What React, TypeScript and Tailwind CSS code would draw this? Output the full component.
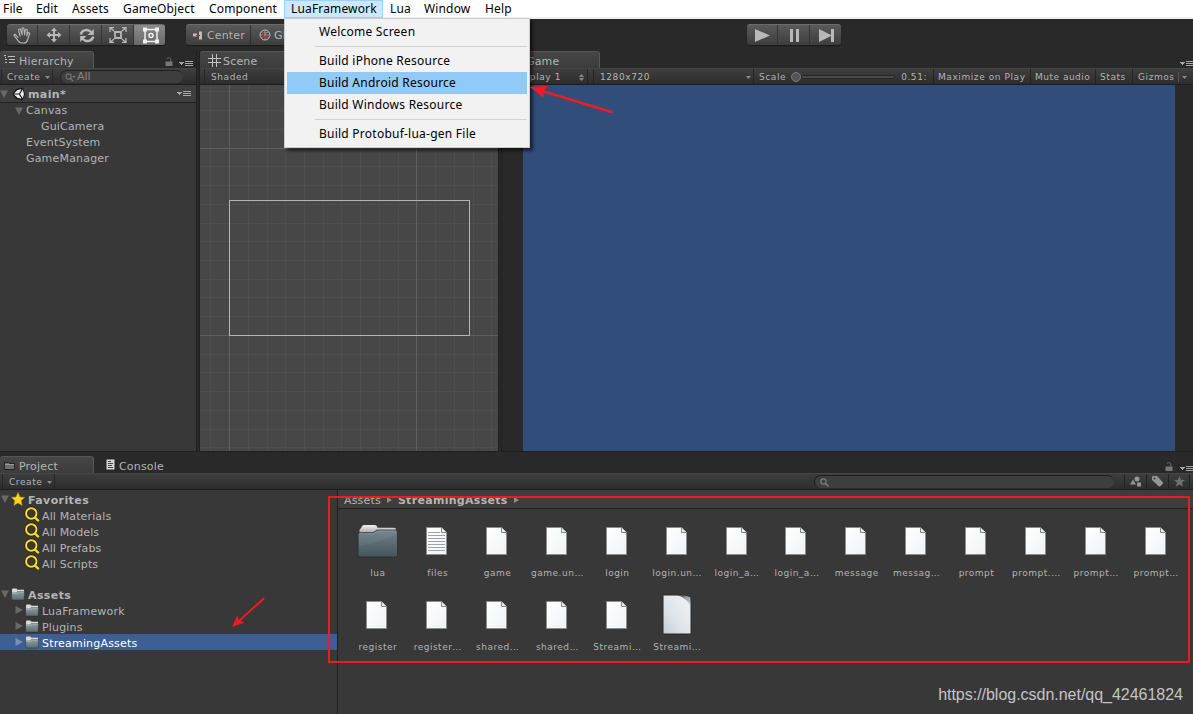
import React from "react";

type Children = { children?: React.ReactNode };

const menus: { label: string; width: string; active?: boolean }[] = [
  { label: "File", width: "w-[29px] pl-[3px]" },
  { label: "Edit", width: "w-[36px] pl-[7px]" },
  { label: "Assets", width: "w-[51px] pl-[7px]" },
  { label: "GameObject", width: "w-[86px] pl-[7px]" },
  { label: "Component", width: "w-[82px] pl-[7px]" },
  { label: "LuaFramework", width: "w-[99px] pl-[6px]", active: true },
  { label: "Lua", width: "w-[34px] pl-[7px]" },
  { label: "Window", width: "w-[61px] pl-[7px]" },
  { label: "Help", width: "w-[42px] pl-[7px]" },
];

const files: { label: string; kind: "folder" | "text" | "doc" | "large" }[] = [
  { label: "lua", kind: "folder" },
  { label: "files", kind: "text" },
  { label: "game", kind: "doc" },
  { label: "game.un…", kind: "doc" },
  { label: "login", kind: "doc" },
  { label: "login.un…", kind: "doc" },
  { label: "login_a…", kind: "doc" },
  { label: "login_a…", kind: "doc" },
  { label: "message", kind: "doc" },
  { label: "messag…", kind: "doc" },
  { label: "prompt", kind: "doc" },
  { label: "prompt.…", kind: "doc" },
  { label: "prompt…", kind: "doc" },
  { label: "prompt…", kind: "doc" },
  { label: "register", kind: "doc" },
  { label: "register…", kind: "doc" },
  { label: "shared…", kind: "doc" },
  { label: "shared…", kind: "doc" },
  { label: "Streami…", kind: "doc" },
  { label: "Streami…", kind: "large" },
];

const gridX = [10, 48, 67, 85, 104, 123, 141, 160, 179, 198, 235, 254, 273, 291];
const gridY = [6, 25, 44, 81, 100, 119, 138, 156, 175, 194, 212, 231, 269, 287, 306, 325, 344, 362];

function Caret({ className = "" }: { className?: string }) {
  return (
    <svg className={`shrink-0 ${className}`} width="5" height="3" viewBox="0 0 5 3">
      <path d="M0 0h5L2.5 3z" fill="#8c8c8c" />
    </svg>
  );
}

function PaneMenu({ className = "" }: { className?: string }) {
  return (
    <svg className={`shrink-0 ${className}`} width="14" height="6" viewBox="0 0 14 6" shapeRendering="crispEdges">
      <path d="M0 1h5L2.5 4z" fill="#a6a6a6" />
      <path d="M6 0h8v1H6zM6 2h8v1H6zM6 4h8v1H6z" fill="#a6a6a6" />
    </svg>
  );
}

function Lock({ className = "" }: { className?: string }) {
  return (
    <svg className={`shrink-0 ${className}`} width="8" height="10" viewBox="0 0 8 10">
      <path d="M1.8 1.8C2.2.3 5.8.2 5.8 2.4V5" fill="none" stroke="#707070" />
      <path d="M.5 4.5h7V9h-7z" fill="#777" />
    </svg>
  );
}

function Fold({ open, bright }: { open?: boolean; bright?: boolean }) {
  return (
    <svg className="shrink-0" width="8" height="8" viewBox="0 0 8 8">
      <path d={open ? "M0 .5h8L4 8z" : "M.5 0v8L8 4z"} fill={bright ? "#7a8fb5" : "#686868"} />
    </svg>
  );
}

function FolderIcon() {
  return (
    <svg className="block shrink-0" width="14" height="13" viewBox="0 0 14 13">
      <path d="M1 1.500Q1 .5 2 .5h3.500l1 1.300H13V5H1z" fill="#d9d9d9" />
      <path d="M.5 5h5l1-1.500h7L13.200 12H.8z" fill="url(#folderSmall)" stroke="#2a3233" strokeWidth=".5" />
      <path d="M1 5.500h5l1-1.500h6" fill="none" stroke="#aab8bd" strokeWidth=".8" />
    </svg>
  );
}

function SearchYellow() {
  return (
    <svg className="block shrink-0" width="16" height="16" viewBox="0 0 16 16">
      <circle cx="7.300" cy="7.500" r="5.200" fill="none" stroke="#2a2508" strokeWidth="3.400" />
      <path d="M11.300 11.800l3 2.700" stroke="#2a2508" strokeWidth="3.600" />
      <circle cx="7.300" cy="7.500" r="5.200" fill="none" stroke="#fbd935" strokeWidth="2" />
      <path d="M11.300 11.800l2.700 2.500" stroke="#fbd91b" strokeWidth="2.500" strokeLinecap="round" />
    </svg>
  );
}

function ToolButton({ children, className = "" }: Children & { className?: string }) {
  return <div className={`flex h-full items-center justify-center ${className}`}>{children}</div>;
}

function FileIcon({ kind }: { kind: "folder" | "text" | "doc" | "large" }) {
  if (kind === "folder") {
    return (
      <svg width="42" height="36" viewBox="0 0 42 36">
        <path d="M2.500 10V7q0-1 1-1.300L5 3.500Q5.500 2 7 2h11q1.500 0 2 1.500l.5 1.200H37q2 0 2.200 2V10z" fill="url(#folderBack)" />
        <path d="M1 11.500q0-1.800 2-1.800h13l4-2.700h18.500q2 0 2 2V32q0 2-2 2H3q-2 0-2-2z" fill="url(#folderFront)" stroke="#272c2e" strokeWidth=".8" />
        <path d="M2 23V11.500q0-1 1.500-1H16.500l4-2.700h18.500v4Q24 19 2 23z" fill="#fff" opacity=".05" />
        <path d="M2.500 10.700h14l4-2.700h18" fill="none" stroke="#93a2a8" strokeWidth=".6" />
      </svg>
    );
  }
  if (kind === "large") {
    return (
      <svg width="30" height="42" viewBox="0 0 30 42">
        <path d="M1 1h15q8 0 12 2 1 4 1 10v27H1z" fill="url(#pageLarge)" stroke="#28292a" strokeWidth="1" />
        <path d="M16 1.300q8 0 12.300 2v9Q25.500 5 16 1.300z" fill="url(#pageCurl)" />
      </svg>
    );
  }
  return (
    <svg width="21" height="28" viewBox="0 0 21 28">
      <path d="M.5.500h15l5 5v22H.5z" fill="url(#page)" stroke="#8b8d8d" />
      <path d="M15.500.500v5h5" fill="#eee" stroke="#858787" />
      {kind === "text" && (
        <path d="M2 5.500h12M2 8.500h17M2 11.500h17M2 14.500h17M2 17.500h17M2 20.500h17M2 23.500h17" stroke="#a2a2a2" />
      )}
    </svg>
  );
}

function TreeRow({ open, leaf, indent, icon, label, bold, selected }: {
  open?: boolean; leaf?: boolean; indent: string; icon?: React.ReactNode; label: string; bold?: boolean; selected?: boolean;
}) {
  return (
    <div className={`flex h-4 shrink-0 items-center ${indent} ${selected ? "bg-[#3e5f96] text-white" : ""}`}>
      {!leaf && <Fold open={open} bright={selected} />}
      {icon}
      <span className={`${icon ? "ml-[3px] pt-[2px]" : "ml-[3px] pb-[2px]"} ${bold ? "font-bold tracking-[0.4px]" : ""}`}>{label}</span>
    </div>
  );
}

function MenuItem({ label, active }: { label: string; active?: boolean }) {
  return (
    <div className={`flex h-[22px] items-center pl-8 ${active ? "bg-[#91c9f7]" : ""}`}>{label}</div>
  );
}

function Defs() {
  return (
    <svg className="absolute h-0 w-0">
      <defs>
        <linearGradient id="folderFront" x1="0" y1="0" x2="0" y2="1">
          <stop offset="0" stopColor="#6f8089" />
          <stop offset="1" stopColor="#45555b" />
        </linearGradient>
        <linearGradient id="folderSmall" x1="0" y1="0" x2="0" y2="1">
          <stop offset="0" stopColor="#92a0a5" />
          <stop offset="1" stopColor="#5c6b70" />
        </linearGradient>
        <linearGradient id="folderBack" x1="0" y1="0" x2="0" y2="1">
          <stop offset="0" stopColor="#f0f0f0" />
          <stop offset="1" stopColor="#a6a6a6" />
        </linearGradient>
        <linearGradient id="page" x1="0" y1="0" x2="1" y2="1">
          <stop offset="0" stopColor="#fff" />
          <stop offset="1" stopColor="#f0f2f4" />
        </linearGradient>
        <linearGradient id="pageLarge" x1="1" y1="0" x2="0" y2="1">
          <stop offset="0" stopColor="#f2f5f7" />
          <stop offset=".6" stopColor="#dfe4e8" />
          <stop offset="1" stopColor="#c3ccd5" />
        </linearGradient>
        <linearGradient id="pageCurl" x1="0" y1="0" x2="1" y2="1">
          <stop offset="0" stopColor="#30353a" />
          <stop offset=".4" stopColor="#8f9aa2" />
          <stop offset="1" stopColor="#d0d6da" />
        </linearGradient>
      </defs>
    </svg>
  );
}

const bar = "flex h-[17px] shrink-0 items-center border-t border-b border-t-[#454545] border-b-[#1d1d1d] bg-gradient-to-b from-[#3e3e3e] to-[#2d2d2d] text-[9px] tracking-[0.58px] whitespace-nowrap";
const tab = "flex h-[17px] items-center rounded-t-[3px] border-t border-r border-t-[#555] border-r-[#595959] bg-gradient-to-b from-[#464646] to-[#3c3c3c]";
const group = "flex h-[21px] shrink-0 overflow-hidden rounded-[3px] border-t border-t-[#6b6b6b] bg-gradient-to-b from-[#5a5a5a] to-[#3d3d3d] shadow-[0_1px_1px_#1a1a1a]";

export default function App() {
  return (
    <div className="relative flex h-[714px] w-[1193px] flex-col overflow-hidden bg-[#292929] font-['DejaVu_Sans',sans-serif] text-[11px] leading-none tracking-[0.18px] text-[#b4b4b4]">
      <Defs />

      {/* Menu bar */}
      <div className="flex h-[19px] shrink-0 border-b-2 border-[#f0f0f0] bg-white font-['Noto_Sans',sans-serif] text-[12px] tracking-[0.15px] text-black">
        {menus.map((m) => (
          <div key={m.label} className={`flex h-[18px] items-center ${m.width} ${m.active ? "border border-[#99d1ff] bg-[#cce8ff]" : ""}`}>
            {m.label}
          </div>
        ))}
      </div>

      {/* Toolbar */}
      <div className="flex h-8 shrink-0 pt-[5px]">
        <div className={`ml-[7px] w-[158px] ${group}`}>
          <ToolButton className="w-[31px] border-r border-[#343434]">
            <svg width="18" height="17" viewBox="0 0 18 17" fill="none" stroke="#b8b8b8" strokeWidth="1.1" strokeLinejoin="round" strokeLinecap="round">
              <path d="M5 10.500L2.200 7.400Q.8 7 1.100 8.300L5.300 14q1 2 3.700 2h2q2.600 0 3.500-3L16.600 7q.2-1.300-.9-1.400-.8 0-1.100 1L13.700 9 14.300 3.400q0-1.200-1-1.200t-1.100 1.200L11.500 8 11 2q0-1.200-1-1.200T9 2v5.800L7.700 2.800Q7.400 1.700 6.400 2t-.8 1.300L7 9" />
            </svg>
          </ToolButton>
          <ToolButton className="w-8 border-r border-[#343434]">
            <svg width="16" height="16" viewBox="0 0 16 16" fill="#b8b8b8">
              <path d="M8 .5l3 3.500H9v3h3V5l3.500 3L12 11V9H9v3h2l-3 3.500L5 12h2V9H4v2L.5 8 4 5v2h3V4H5z" />
            </svg>
          </ToolButton>
          <ToolButton className="w-8 border-r border-[#343434] pl-[2px]">
            <svg width="16" height="15" viewBox="0 0 16 15">
              <path d="M1.800 6.500C2.500 1.800 9 .3 12.300 4.300M14.200 8.500C13.500 13.200 7 14.700 3.700 10.700" fill="none" stroke="#b8b8b8" strokeWidth="2.400" />
              <path d="M14.800 1v6H8.600zM1.200 14V8h6.200z" fill="#b8b8b8" />
            </svg>
          </ToolButton>
          <ToolButton className="w-8 border-r border-[#343434] pl-[1px]">
            <svg width="18" height="16" viewBox="0 0 18 16" fill="none" stroke="#b8b8b8">
              <path d="M6 5h6v6H6z" strokeWidth="1.800" />
              <path d="M5 4L1.500 1M13 4l3.500-3M5 12l-3.500 3M13 12l3.500 3M1 5V.700h4M13 .700h4V5M1 11v4.300h4M13 15.300h4V11" strokeWidth="1.300" />
            </svg>
          </ToolButton>
          <ToolButton className="w-[31px] bg-gradient-to-b from-[#8a8a8a] to-[#696969] pl-[2px]">
            <svg width="18" height="17" viewBox="0 0 18 17" fill="none" stroke="#f0f0f0">
              <path d="M3 2.500h12v12H3z" strokeWidth="1.500" />
              <circle cx="9" cy="8.500" r="2" strokeWidth="1.500" />
              <path d="M1 .5h4v4H1zM13 .5h4v4h-4zM1 12.500h4v4H1zM13 12.500h4v4h-4z" fill="#f0f0f0" stroke="none" />
            </svg>
          </ToolButton>
        </div>
        <div className={`ml-[21px] w-[132px] ${group}`}>
          <div className="flex w-[65px] items-center border-r border-[#303030] pl-[7px]">
            <svg className="shrink-0" width="11" height="9" viewBox="0 0 11 9">
              <path d="M0 2.500h4v3H0zM6 .5h3v8H6z" fill="#bcbcbc" />
              <path d="M5 0v9M3 4.500h4" stroke="#9e3036" />
            </svg>
            <span className="ml-[3px] tracking-[0.15px]">Center</span>
          </div>
          <div className="flex items-center pl-[8px]">
            <svg className="shrink-0" width="12" height="12" viewBox="0 0 12 12" fill="none" stroke="#b8b8b8">
              <circle cx="6" cy="6" r="5" />
              <path d="M6 1v10M1 6h10M2 3q4 2 8 0M2 9q4-2 8 0" strokeWidth=".6" />
              <path d="M4 3v5h5" stroke="#b92831" strokeWidth="1.500" />
            </svg>
            <span className="ml-[3px]">Global</span>
          </div>
        </div>
        <div className={`ml-[429px] w-[94px] ${group}`}>
          <ToolButton className="w-[31px] border-r border-[#343434]">
            <svg width="15" height="13" viewBox="0 0 15 13"><path d="M0 0l15 6.500L0 13z" fill="#b8b8b8" /></svg>
          </ToolButton>
          <ToolButton className="w-8 border-r border-[#343434] pl-[2px]">
            <svg width="9" height="13" viewBox="0 0 9 13"><path d="M0 0h3v13H0zM6 0h3v13H6z" fill="#b8b8b8" /></svg>
          </ToolButton>
          <ToolButton className="w-[31px] pl-[2px]">
            <svg width="15" height="13" viewBox="0 0 15 13"><path d="M0 0l12 6v-6h3v13h-3V7L0 13z" fill="#b8b8b8" /></svg>
          </ToolButton>
        </div>
      </div>

      {/* Upper panels */}
      <div className="flex h-[401px] shrink-0">
        <section className="flex w-[197px] flex-col border-r border-b border-[#1f1f1f]">
          <div className="flex h-[17px]">
            <div className={`w-[94px] pl-1 ${tab}`}>
              <svg className="mr-[3px] shrink-0" width="12" height="10" viewBox="0 0 12 10" shapeRendering="crispEdges">
                <path d="M0 0h2v1H0zM4 1h7v1H4zM1 2h1v1H1zM1 4h2v1H1zM5 4h6v1H5zM1 7h2v1H1zM5 7h6v1H5z" fill="#bebebe" />
              </svg>
              <span className="pt-[2px]">Hierarchy</span>
            </div>
            <Lock className="mt-[6px] ml-[71px]" />
            <PaneMenu className="mt-[10px] ml-[6px]" />
          </div>
          <div className={bar}>
            <div className="ml-[1px] flex h-full w-[52px] items-center border-r border-l border-[#262626] pt-[1px] pl-[5px]">
              Create<Caret className="ml-[5px]" />
            </div>
            <div className="ml-[7px] flex h-[13px] w-[123px] items-center rounded-full border-t border-l border-[#222] bg-[#3e3e3e] pl-1 text-[11px] tracking-normal text-[#858585]">
              <svg className="mr-[1px] shrink-0" width="11" height="9" viewBox="0 0 11 9">
                <circle cx="3.500" cy="3.500" r="2.600" fill="none" stroke="#757575" strokeWidth="1.200" />
                <path d="M5.500 5.500L8 8" stroke="#757575" strokeWidth="1.400" /><path d="M7 3h4L9 5z" fill="#757575" />
              </svg>
              <span className="pb-[2px]">All</span>
            </div>
          </div>
          <div className="flex flex-1 flex-col bg-[#383838]">
            <div className="flex h-[18px] shrink-0 items-center border-b border-[#222] bg-[#3e3e3e]">
              <Fold open />
              <svg className="ml-[4px] shrink-0" width="14" height="14" viewBox="0 0 14 14">
                <path d="M10.500.500L13 7l-2.500 6.500L4 12 .3 7 4 2z" fill="#1b1b1b" />
                <path d="M5.500 3L9.500 2.200 7 6.500H2zM2 7.500h5l2.500 4.300-4-1zM10.700 2.800L12 7l-1.300 4.200L8 7z" fill="#eee" />
              </svg>
              <span className="ml-[2px] pt-[1px] font-bold tracking-[0.4px]">main*</span>
              <PaneMenu className="ml-auto mr-[5px]" />
            </div>
            <TreeRow open indent="pl-[15px]" label="Canvas" />
            <TreeRow leaf indent="pl-[38px]" label="GuiCamera" />
            <TreeRow leaf indent="pl-[23px]" label="EventSystem" />
            <TreeRow leaf indent="pl-[23px]" label="GameManager" />
          </div>
        </section>

        <section className="ml-[2px] flex w-[300px] flex-col border-r border-b border-l border-[#1f1f1f]">
          <div className={`w-[94px] pl-2 ${tab}`}>
            <svg className="mr-[2px] shrink-0" width="13" height="13" viewBox="0 0 13 13" shapeRendering="crispEdges">
              <path d="M4 0h1v13H4zM8 0h1v13H8zM0 4h13v1H0zM0 8h13v1H0z" fill="#c1c1c1" />
            </svg>
            <span className="pt-[2px]">Scene</span>
          </div>
          <div className={bar}>
            <div className="ml-1 flex h-full w-[120px] items-center border-l border-[#262626] pt-[1px] pl-[6px]">Shaded</div>
          </div>
          <svg className="h-[366px] w-[298px] bg-[#474747]" viewBox="0 0 298 366" shapeRendering="crispEdges">
            {gridX.map((x) => <rect key={`x${x}`} x={x} width="1" height="366" fill="#4e4e4e" />)}
            {gridY.map((y) => <rect key={`y${y}`} y={y} width="298" height="1" fill="#4e4e4e" />)}
            <path d="M29.500 0v366M216.500 0v366M0 63.500h298M0 250.500h298" stroke="#606060" />
            <rect x="29.500" y="115.500" width="240" height="135" fill="none" stroke="#b5b5b5" />
          </svg>
        </section>

        <section className="ml-[2px] flex flex-1 flex-col border-b border-l border-[#1f1f1f]">
          <div className="flex h-[17px]">
            <div className={`w-[98px] pl-[24px] ${tab}`}><span className="pt-[2px]">Game</span></div>
            <PaneMenu className="mt-[10px] -mr-px ml-auto" />
          </div>
          <div className={bar}>
            <div className="flex h-full w-[86px] items-center border-r border-[#232323] pt-[1px] pl-[12px]">
              Display 1
              <svg className="ml-auto mr-[3px]" width="5" height="7" viewBox="0 0 5 7"><path d="M0 3L2.500 0 5 3zM0 4h5L2.500 7z" fill="#8c8c8c" /></svg>
            </div>
            <div className="ml-[5px] flex h-full w-[161px] items-center border-r border-l border-[#232323] pt-[1px] pl-[6px]">
              1280x720<Caret className="ml-auto mr-[2px]" />
            </div>
            <div className="flex h-full w-[179px] items-center pt-[1px] pl-[5px]">
              <span className="pt-[1px]">Scale</span>
              <span className="ml-[5px] h-[10px] w-[10px] rounded-full border border-[#777] bg-[#555]" />
              <span className="h-[4px] w-[94px] rounded-r border border-[#272727] bg-[#484848]" />
              <span className="ml-[6px] pt-[1px]">0.51:</span>
            </div>
            <div className="flex h-full w-[97px] items-center border-l border-[#232323] pt-[1px] pl-[4px]">Maximize on Play</div>
            <div className="flex h-full w-[65px] items-center border-l border-[#232323] pt-[1px] pl-[4px] tracking-[0.5px]">Mute audio</div>
            <div className="flex h-full w-[37px] items-center border-l border-[#232323] pt-[1px] pl-[4px]">Stats</div>
            <div className="flex h-full flex-1 items-center border-l border-[#232323] pt-[1px] pl-[5px]">
              Gizmos<span className="ml-[3px] h-[10px] w-px bg-[#555]" /><Caret className="ml-[3px]" />
            </div>
          </div>
          <div className="flex flex-1 pr-[18px] pl-[21px]"><div className="flex-1 bg-[#314d79]" /></div>
        </section>
      </div>

      {/* Project browser */}
      <section className="mt-[4px] flex min-h-0 flex-1 flex-col">
        <div className="flex h-[17px] shrink-0">
          <div className={`w-[94px] pl-1 ${tab}`}>
            <svg className="mr-[4px] shrink-0" width="11" height="9" viewBox="0 0 11 9">
              <path d="M.5 1.500h4l1 1h5v6H.5z" fill="#6e6e6e" stroke="#222" /><path d="M1 3.500h9" stroke="#999" />
            </svg>
            <span className="pt-[2px]">Project</span>
          </div>
          <svg className="mt-[3px] ml-[12px] shrink-0" width="9" height="11" viewBox="0 0 9 11">
            <path d="M.5.500h8v10h-8z" fill="#d6d6d6" /><path d="M2 2.500h3M2 4.500h5M2 6.500h4M2 8.500h5" stroke="#444" />
          </svg>
          <span className="ml-1 pt-[5px]">Console</span>
          <Lock className="mt-[6px] ml-auto" />
          <PaneMenu className="mt-[10px] -mr-px ml-[7px]" />
        </div>
        <div className={bar}>
          <div className="ml-[2px] flex h-full w-[53px] items-center border-r border-l border-[#262626] pt-[2px] pl-[6px]">
            Create<Caret className="ml-[5px]" />
          </div>
          <div className="ml-[759px] flex h-[13px] w-[300px] items-center rounded-full border-t border-l border-[#1e1e1e] bg-[#3e3e3e] pl-[5px]">
            <svg width="9" height="9" viewBox="0 0 9 9" fill="none" stroke="#7e7e7e">
              <circle cx="3.500" cy="3.500" r="2.700" strokeWidth="1.200" /><path d="M5.500 5.500L8.500 8.500" strokeWidth="1.500" />
            </svg>
          </div>
          <div className="ml-[10px] flex h-full w-[22px] items-center justify-center border-l border-[#222]">
            <svg width="12" height="11" viewBox="0 0 12 11" fill="#969696">
              <circle cx="7" cy="3" r="2.500" /><path d="M0 8.500L3 3.500l3 5zM7 6.500h4v4H7z" />
            </svg>
          </div>
          <div className="flex h-full w-[22px] items-center justify-center border-l border-[#222]">
            <svg width="11" height="11" viewBox="0 0 11 11">
              <path d="M0 1l1-1h4l6 6.500v1L8 10.500H7L0 4z" fill="#969696" /><circle cx="2.500" cy="2.500" r="1" fill="#333" />
            </svg>
          </div>
          <div className="flex h-full w-[22px] items-center justify-center border-r border-l border-[#222]">
            <svg width="11" height="11" viewBox="0 0 11 11"><path d="M5.500 0L7 3.800l4 .2-3 2.600 1 4L5.500 8.400 2 10.600l1-4L0 4l4-.2z" fill="#707070" /></svg>
          </div>
        </div>
        <div className="flex min-h-0 flex-1 bg-[#383838]">
          <div className="flex w-[337px] flex-col pt-[1px]">
            <TreeRow open indent="pl-[1px]" bold label="Favorites" icon={
              <svg className="ml-[2px] shrink-0" width="14" height="14" viewBox="0 0 14 14">
                <path d="M7 .5L9 5l4.700.4-3.500 3.200 1 4.900L7 11l-4.200 2.500 1-4.900L.3 5.400 5 5z" fill="#fcd520" stroke="#b58b0a" strokeWidth=".5" />
              </svg>
            } />
            {["All Materials", "All Models", "All Prefabs", "All Scripts"].map((label) => (
              <div key={label} className="flex h-4 items-center pl-6">
                <span className="-mt-[2px] shrink-0"><SearchYellow /></span>
                <span className="ml-[2px] pt-[2px] tracking-[0.13px]">{label}</span>
              </div>
            ))}
            <div className="h-[15px] shrink-0" />
            <TreeRow open indent="pl-[1px]" bold label="Assets" icon={<span className="ml-[2px]"><FolderIcon /></span>} />
            <TreeRow indent="pl-[15px]" label="LuaFramework" icon={<span className="ml-[2px]"><FolderIcon /></span>} />
            <TreeRow indent="pl-[15px]" label="Plugins" icon={<span className="ml-[2px]"><FolderIcon /></span>} />
            <TreeRow indent="pl-[15px]" label="StreamingAssets" selected icon={<span className="ml-[2px]"><FolderIcon /></span>} />
          </div>
          <div className="flex flex-1 flex-col border-l border-[#1f1f1f]">
            <div className="flex h-[19px] shrink-0 items-center border-b border-[#1f1f1f] bg-[#3d3d3d] pt-[2px] pl-[6px]">
              <span>Assets</span>
              <svg className="mx-[6px]" width="5" height="6" viewBox="0 0 5 6"><path d="M0 0l5 3-5 3z" fill="#8d8d8d" /></svg>
              <span className="font-bold tracking-[0.3px]">StreamingAssets</span>
              <svg className="ml-[6px]" width="5" height="6" viewBox="0 0 5 6"><path d="M0 0l5 3-5 3z" fill="#8d8d8d" /></svg>
            </div>
            <div className="grid w-[848px] grid-cols-14 pt-[6px] pl-[10px] text-[9px] tracking-[0.5px]">
              {files.map((f, i) => (
                <div key={i} className="flex h-[74px] flex-col items-center">
                  <div className={`flex h-[52px] shrink-0 items-center justify-center ${f.kind === "doc" || f.kind === "text" ? "pr-[2px]" : ""}`}>
                    <FileIcon kind={f.kind} />
                  </div>
                  <span className="pt-[2px] whitespace-nowrap">{f.label}</span>
                </div>
              ))}
            </div>
            <div className="mt-auto mr-[10px] mb-[11px] self-end font-['Liberation_Sans',sans-serif] text-[16px] tracking-[-0.02px] text-[#c4c4c4]">
              https://blog.csdn.net/qq_42461824
            </div>
          </div>
        </div>
      </section>

      {/* Open menu */}
      <div className="absolute top-[18px] left-[284px] flex h-[130px] w-[246px] flex-col border border-[#ccc] bg-[#f2f2f2] p-[2px] font-['Noto_Sans',sans-serif] text-[12px] tracking-[0.24px] text-black shadow-[3px_3px_3px_rgba(0,0,0,0.55)]">
        <MenuItem label="Welcome Screen" />
        <div className="mt-[3px] mb-[3px] ml-7 h-px shrink-0 bg-[#d2d2d2]" />
        <MenuItem label="Build iPhone Resource" />
        <MenuItem label="Build Android Resource" active />
        <MenuItem label="Build Windows Resource" />
        <div className="mt-[3px] mb-[3px] ml-7 h-px shrink-0 bg-[#d2d2d2]" />
        <MenuItem label="Build Protobuf-lua-gen File" />
      </div>

      {/* Annotations */}
      <div className="pointer-events-none absolute top-[496px] left-[328px] h-[167px] w-[862px] border-2 border-[#ed1c24]" />
      <svg className="pointer-events-none absolute inset-0" width="1193" height="714" viewBox="0 0 1193 714">
        <path d="M542 91l69.500 21" stroke="#ed1c24" strokeWidth="2.600" strokeLinecap="round" />
        <path d="M530 87l18-1.300-4 5 -.7 7z" fill="#ed1c24" />
        <path d="M240 620l23.500-21.300" stroke="#ed1c24" strokeWidth="2" strokeLinecap="round" />
        <path d="M232 627l5.300-11.500 1.700 5 5.500 2z" fill="#ed1c24" />
      </svg>
    </div>
  );
}
